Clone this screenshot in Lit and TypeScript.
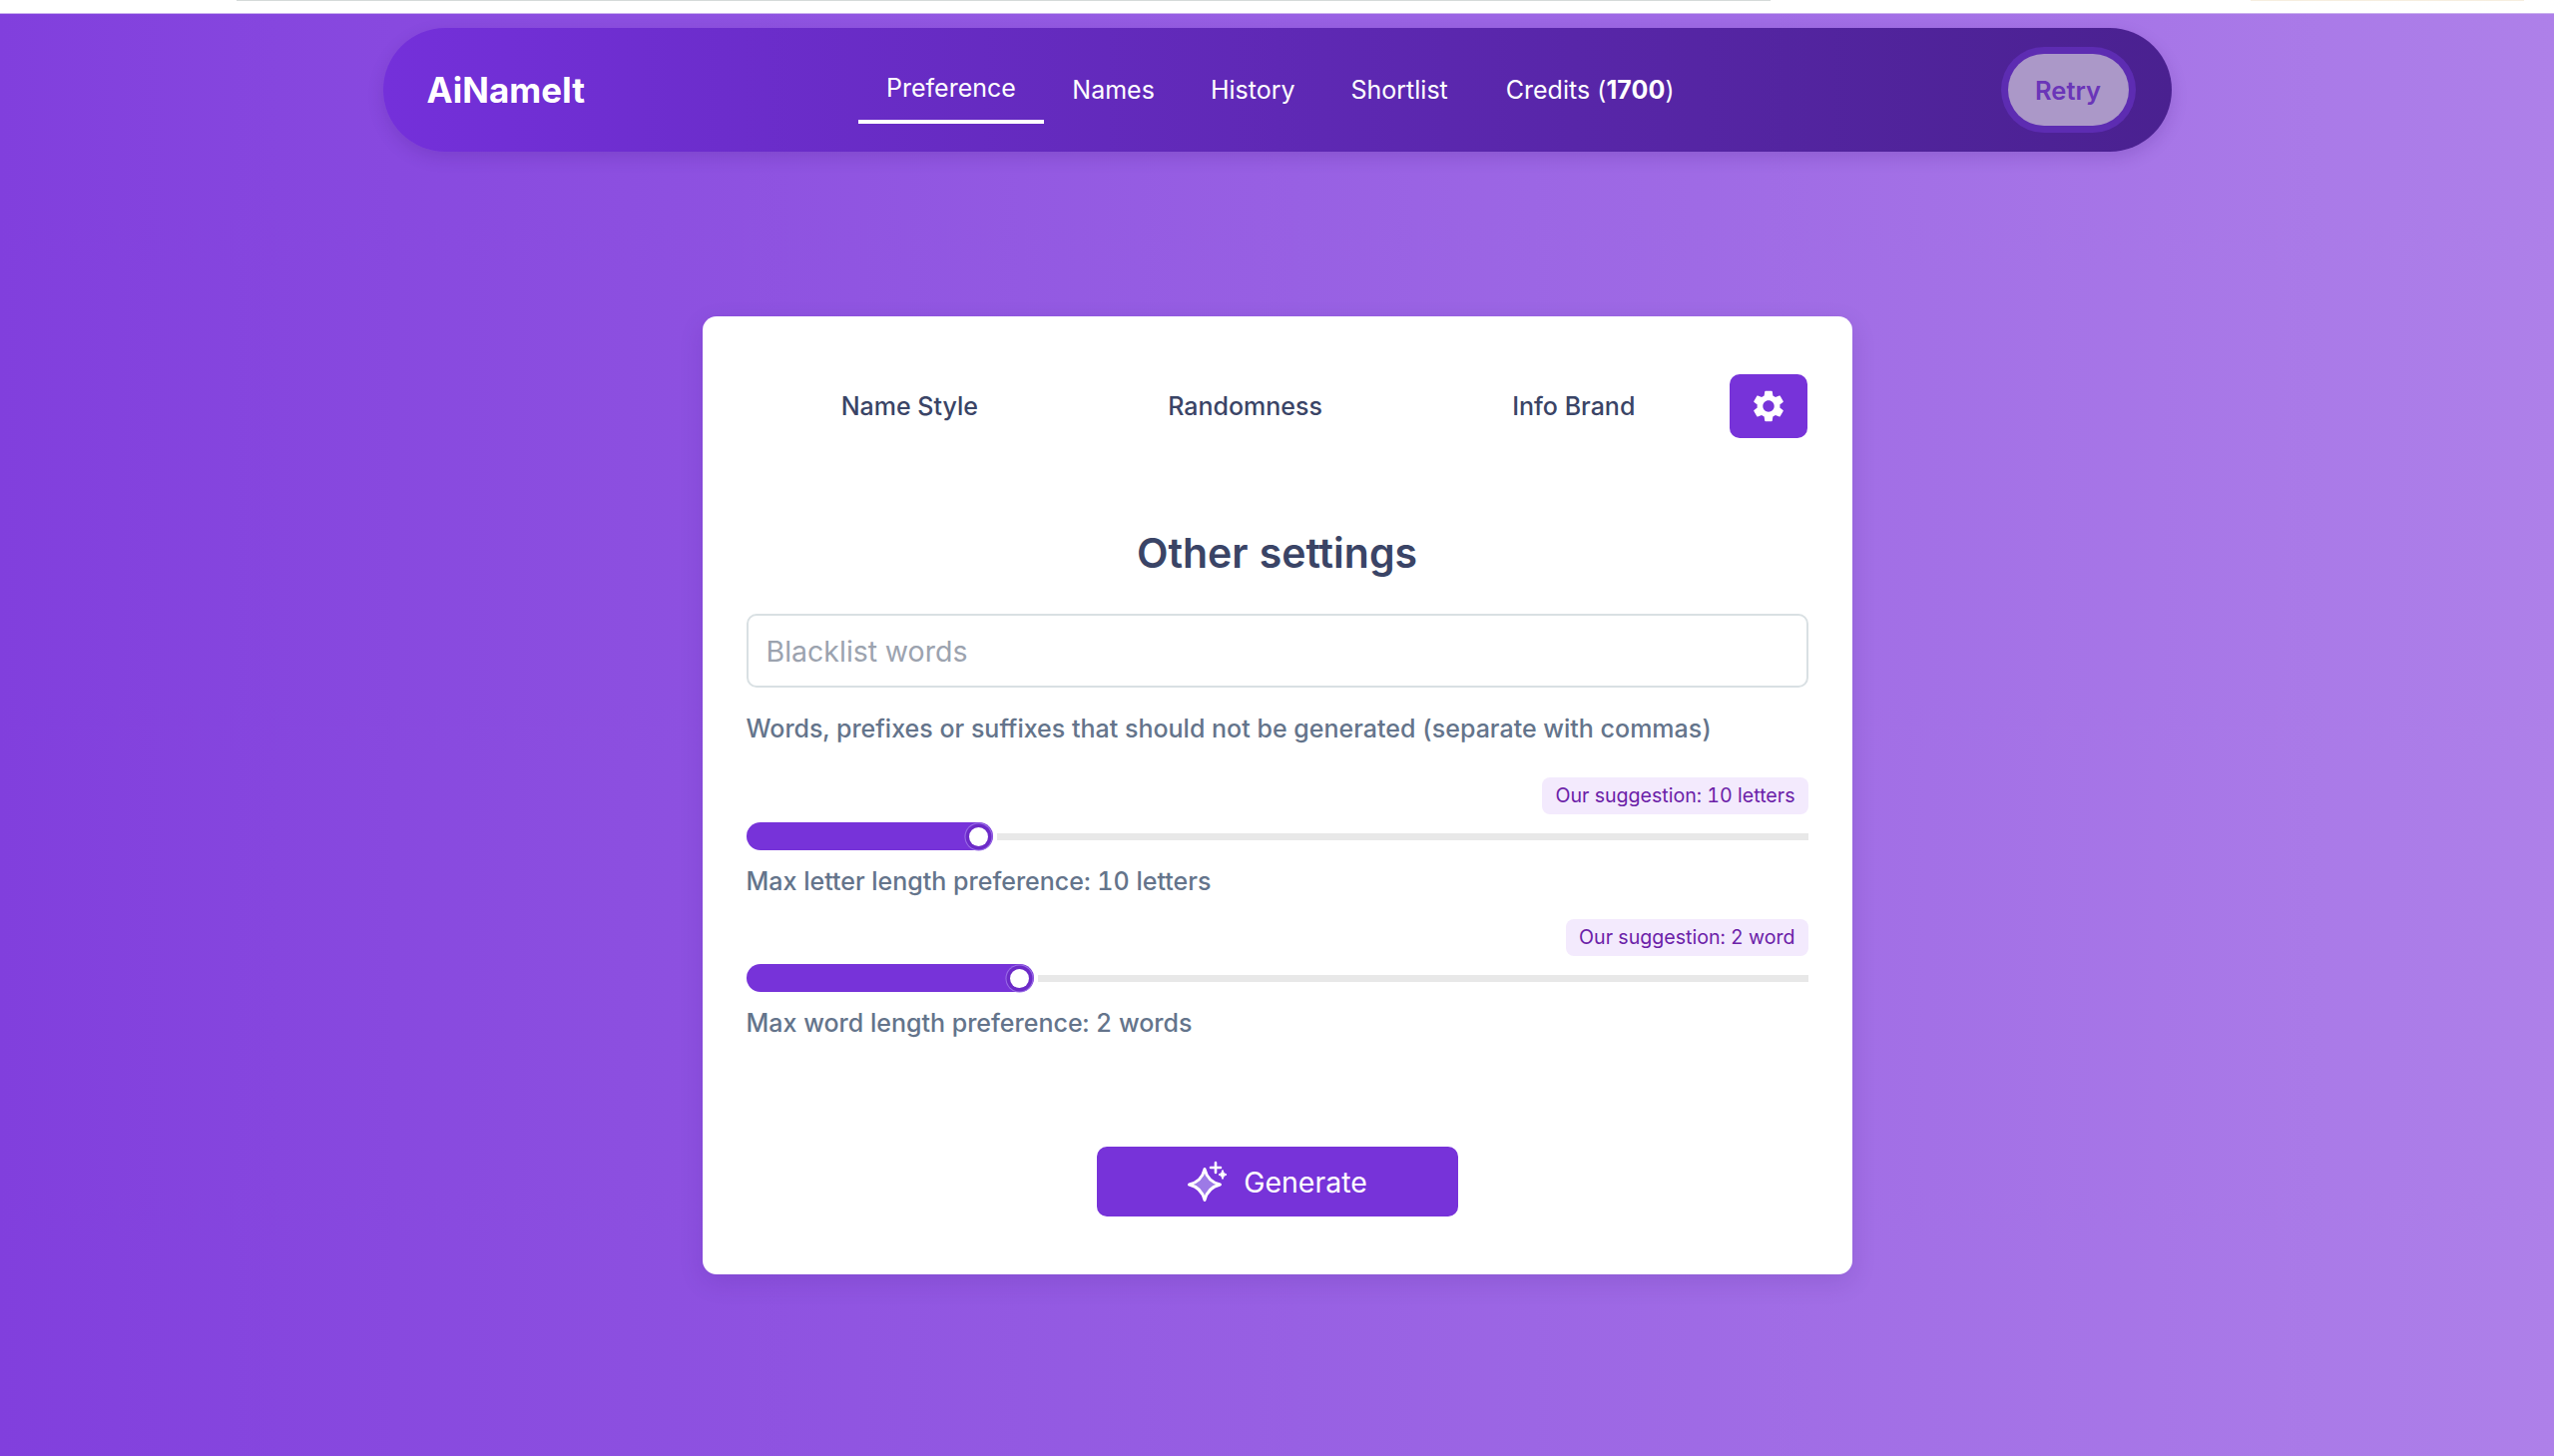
import { LitElement, html, css, svg } from "lit";
import { customElement } from "lit/decorators.js";

const NAV = ["Names", "History", "Shortlist"];
const TABS = ["Name Style", "Randomness", "Info Brand"];
const SLIDERS = [
  { hint: "Our suggestion: 10 letters", label: "Max letter length preference: 10 letters", width: 247 },
  { hint: "Our suggestion: 2 word", label: "Max word length preference: 2 words", width: 288 },
];

const gear = svg`<path d="M19.14 12.94c.04-.3.06-.61.06-.94 0-.32-.02-.64-.07-.94l2.03-1.58c.18-.14.23-.41.12-.61l-1.92-3.32c-.12-.22-.37-.29-.59-.22l-2.39.96c-.5-.38-1.03-.7-1.62-.94l-.36-2.54c-.04-.24-.24-.41-.48-.41h-3.84c-.24 0-.43.17-.47.41l-.36 2.54c-.59.24-1.13.57-1.62.94l-2.39-.96c-.22-.08-.47 0-.59.22L2.74 8.87c-.12.21-.08.47.12.61l2.03 1.58c-.05.3-.09.63-.09.94s.02.64.07.94l-2.03 1.58c-.18.14-.23.41-.12.61l1.92 3.32c.12.22.37.29.59.22l2.39-.96c.5.38 1.03.7 1.62.94l.36 2.54c.05.24.24.41.48.41h3.84c.24 0 .44-.17.47-.41l.36-2.54c.59-.24 1.13-.56 1.62-.94l2.39.96c.22.08.47 0 .59-.22l1.92-3.32c.12-.22.07-.47-.12-.61l-2.01-1.58zM12 15.6c-1.98 0-3.6-1.62-3.6-3.6s1.62-3.6 3.6-3.6 3.6 1.62 3.6 3.6-1.62 3.6-3.6 3.6z"/>`;

const sparkle = svg`
  <path d="M18 8.5 Q21 21 33.5 24 Q21 27 18 39.5 Q15 27 2.5 24 Q15 21 18 8.5Z" fill="#9d7ae6" stroke="#fff" stroke-width="3" stroke-linejoin="round"/>
  <path d="M29 2v10M24 7h10" fill="none" stroke="#fff" stroke-width="2.6" stroke-linecap="round"/>
  <path d="M36 9.5 Q36.6 13.4 40 14 Q36.6 14.6 36 18.5 Q35.4 14.6 32 14 Q35.4 13.4 36 9.5Z" fill="#fff" stroke="#fff" stroke-width="1"/>
`;

@customElement("app-root")
export class AppRoot extends LitElement {
  static styles = css`
    :host {
      display: block;
      min-height: 1459px;
      box-sizing: border-box;
      font-family: Inter, "Liberation Sans", sans-serif;
      font-variant-numeric: tabular-nums;
      background: linear-gradient(90deg, #813fdd 0%, #ae80e9 100%);
    }
    .strip {
      height: 14px;
      box-sizing: border-box;
      background: #fff;
      border-bottom: 1px solid #c9b0ee;
      display: flex;
      padding-left: 237px;
    }
    .strip i { display: block; height: 1px; }
    .strip .a { width: 1537px; background: #d5dad9; margin-right: 481px; }
    .strip .b { width: 274px; background: #f6eedf; }
    .nav {
      width: 1792px;
      height: 124px;
      margin: 14px auto 0;
      box-sizing: border-box;
      padding: 0 43px 0 44px;
      border-radius: 62px;
      background: linear-gradient(90deg, #7430da 0%, #4a2190 100%);
      box-shadow: 0 6px 16px rgba(60, 20, 120, 0.18);
      display: flex;
      align-items: center;
      color: #fff;
    }
    .logo { font-size: 35px; font-weight: 700; width: 432px; }
    .links { display: flex; flex: 1; align-items: center; }
    .link { font-size: 25px; font-weight: 400; padding: 0 28px; line-height: 62px; }
    .link:last-child { padding-left: 30px; }
    .link b { font-weight: 700; font-variant-numeric: normal; }
    .link.active { line-height: 64px; border-bottom: 4px solid #fff; padding: 0 28.5px; }
    .retry {
      width: 121px;
      height: 72px;
      border: 0;
      border-radius: 36px;
      background: #ab98c8;
      box-shadow: 0 0 0 7px #5d2cb2;
      color: #6a35b8;
      font: 600 25.5px Inter, sans-serif;
      padding: 0;
    }
    .card {
      width: 1152px;
      margin: 165px auto 0;
      box-sizing: border-box;
      padding: 58px 44px;
      height: 960px;
      background: #fff;
      border-radius: 14px;
      box-shadow: 0 8px 24px rgba(60, 20, 120, 0.14);
      display: flex;
      flex-direction: column;
    }
    .tabs { display: flex; align-items: center; height: 64px; }
    .tab { flex: 1 1 auto; text-align: center; font-size: 25px; font-weight: 500; color: #3a4466; }
    .gear {
      width: 78px;
      height: 64px;
      border-radius: 10px;
      background: #7733d9;
      display: flex;
      align-items: center;
      justify-content: center;
    }
    .gear svg { width: 38px; height: 38px; fill: #fff; }
    h2 {
      margin: 87px 0 0;
      height: 56px;
      line-height: 56px;
      text-align: center;
      font-size: 41px;
      font-weight: 600;
      color: #3a4466;
    }
    .input {
      margin-top: 33px;
      height: 74px;
      box-sizing: border-box;
      border: 2px solid #d9e0e3;
      border-radius: 10px;
      padding: 0 18px;
      display: flex;
      align-items: center;
      font-size: 28.5px;
      color: #9ca3af;
    }
    .help { margin-top: 23px; font-size: 25px; line-height: 36px; font-weight: 500; color: #64748b; }
    .group { display: flex; flex-direction: column; }
    .hint {
      align-self: flex-end;
      height: 37px;
      box-sizing: border-box;
      padding: 0 13px;
      border-radius: 8px;
      background: #f3eafd;
      color: #6b21a8;
      font-size: 19.6px;
      line-height: 37px;
      margin-top: 31px;
    }
    .group + .group .hint { margin-top: 20px; }
    .slider { margin-top: 8px; height: 28px; display: flex; align-items: center; gap: 4px; }
    .fill {
      height: 28px;
      border-radius: 14px;
      background: #7733d9;
      display: flex;
      align-items: center;
      justify-content: flex-end;
      padding-right: 5px;
      box-sizing: border-box;
    }
    .thumb {
      width: 19px;
      height: 19px;
      border-radius: 50%;
      background: #fff;
      box-shadow: 0 0 0 3.5px #6c2ac8, 0 0 0 4.5px #9a6ee6;
    }
    .track { flex: 1; height: 7px; background: #e8e8e8; }
    .caption { margin-top: 13px; font-size: 25px; line-height: 36px; font-weight: 500; color: #64748b; }
    .generate {
      margin: auto auto 0;
      width: 362px;
      height: 70px;
      border: 0;
      border-radius: 10px;
      background: #7733d9;
      color: #fff;
      display: flex;
      align-items: center;
      justify-content: center;
      gap: 17px;
      font: 400 28.5px Inter, sans-serif;
    }
    .generate svg { width: 40px; height: 42px; }
  `;

  render() {
    return html`
      <div class="strip"><i class="a"></i><i class="b"></i></div>
      <header class="nav">
        <div class="logo">AiNameIt</div>
        <nav class="links">
          <span class="link active">Preference</span>
          ${NAV.map((n) => html`<span class="link">${n}</span>`)}
          <span class="link">Credits (<b>1700</b>)</span>
        </nav>
        <button class="retry">Retry</button>
      </header>
      <main class="card">
        <div class="tabs">
          ${TABS.map((t) => html`<div class="tab">${t}</div>`)}
          <div class="gear"><svg viewBox="0 0 24 24">${gear}</svg></div>
        </div>
        <h2>Other settings</h2>
        <div class="input">Blacklist words</div>
        <div class="help">Words, prefixes or suffixes that should not be generated (separate with commas)</div>
        ${SLIDERS.map(
          (s) => html`<div class="group">
            <div class="hint">${s.hint}</div>
            <div class="slider">
              <div class="fill" style="width:${s.width}px"><div class="thumb"></div></div>
              <div class="track"></div>
            </div>
            <div class="caption">${s.label}</div>
          </div>`
        )}
        <button class="generate"><svg viewBox="0 0 40 42">${sparkle}</svg>Generate</button>
      </main>
    `;
  }
}
